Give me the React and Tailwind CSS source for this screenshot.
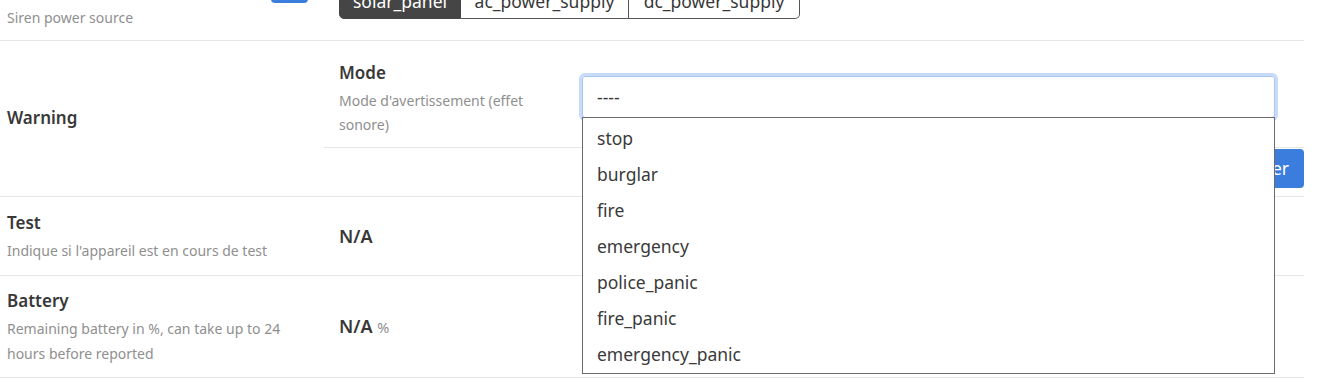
import React from "react";

const font = { fontFamily: '"Noto Sans", "Open Sans", sans-serif' };

export default function App() {
  const options = ["stop", "burglar", "fire", "emergency", "police_panic", "fire_panic", "emergency_panic"];
  return (
    <div className="bg-white w-[1339px] h-[387px] overflow-hidden" style={font}>
      {/* top partial row */}
      <div className="flex h-[41px] overflow-hidden border-b border-[#e6e6e6] w-[1304px] items-end">
        <div className="w-[324px] pl-[7px] flex items-end justify-between pr-[16px] h-full">
          <div className="text-[14px] text-[#8f8f8f] leading-[25px] mb-[10px]">Siren power source</div>
          <div className="w-[37px] h-[30px] bg-[#3b7ddd] rounded-[4px] self-start -mt-[27px]"></div>
        </div>
        <div className="flex-1 pl-[15px] flex h-full">
          <div className="flex self-start -mt-[17px] text-[17.5px] leading-[24px]">
            <div className="h-[36px] w-[122px] bg-[#454545] text-white border border-[#454545] rounded-l-[5px] flex items-center justify-center">solar_panel</div>
            <div className="h-[36px] w-[168px] text-[#383838] border border-[#555] border-l-0 flex items-center justify-center">ac_power_supply</div>
            <div className="h-[36px] w-[171px] text-[#383838] border border-[#555] border-l-0 rounded-r-[5px] flex items-center justify-center">dc_power_supply</div>
          </div>
        </div>
      </div>

      {/* Warning row */}
      <div className="flex border-b border-[#e6e6e6] w-[1304px] h-[156px]">
        <div className="w-[324px] pl-[7px] flex items-center">
          <div className="text-[17px] font-semibold text-[#383838] leading-[26px] -mt-[2px]">Warning</div>
        </div>
        <div className="flex-1 flex flex-col">
          <div className="flex items-start h-[107px] border-b border-[#e6e6e6] pl-[15px] relative">
            <div className="w-[228px] pt-[19px]">
              <div className="text-[17px] font-semibold text-[#383838] leading-[26px] mb-[3px]">Mode</div>
              <div className="text-[14px] text-[#8f8f8f] leading-[24px]">Mode d'avertissement (effet sonore)</div>
            </div>
            <div className="ml-[15px] mr-[29px] flex-1 relative mt-[35px]">
              <div className="h-[42px] border border-[#a9c6f3] rounded-[3px] shadow-[0_0_0_3px_#c9dbfa] flex items-center pl-[14px] text-[17.5px] text-[#383838]">
                ----
              </div>
              <div className="absolute left-0 right-0 top-[41px] z-10 bg-white border border-[#6b6b6b] pt-[2px] pb-[1px]">
                {options.map((o) => (
                  <div key={o} className="h-[36px] flex items-center pl-[14px] text-[17.5px] text-[#3a3a3a]">{o}</div>
                ))}
              </div>
            </div>
          </div>
          <div className="flex justify-end pt-[1px]">
            <button className="h-[39px] px-[15px] bg-[#3b7ddd] text-white text-[17.5px] rounded-[4px]">Enregistrer</button>
          </div>
        </div>
      </div>

      {/* Test row */}
      <div className="flex border-b border-[#e6e6e6] w-[1304px] h-[79px]">
        <div className="w-[324px] pl-[7px] flex flex-col justify-center">
          <div className="text-[17px] font-semibold text-[#383838] leading-[26px] mb-[2px]">Test</div>
          <div className="text-[14px] text-[#8f8f8f] leading-[25px]">Indique si l'appareil est en cours de test</div>
        </div>
        <div className="flex-1 pl-[15px] flex items-center">
          <div className="text-[18px] font-semibold text-[#383838]">N/A</div>
        </div>
      </div>

      {/* Battery row */}
      <div className="flex border-b border-[#e6e6e6] w-[1304px] h-[102px]">
        <div className="w-[324px] pl-[7px] flex flex-col justify-center">
          <div className="text-[17px] font-semibold text-[#383838] leading-[26px] mb-[2px]">Battery</div>
          <div className="text-[14px] text-[#8f8f8f] leading-[25px] w-[290px]">Remaining battery in %, can take up to 24 hours before reported</div>
        </div>
        <div className="flex-1 pl-[15px] flex items-center">
          <div className="text-[18px] font-semibold text-[#383838]">N/A <span className="text-[14.5px] font-normal text-[#8f8f8f]">%</span></div>
        </div>
      </div>
    </div>
  );
}
